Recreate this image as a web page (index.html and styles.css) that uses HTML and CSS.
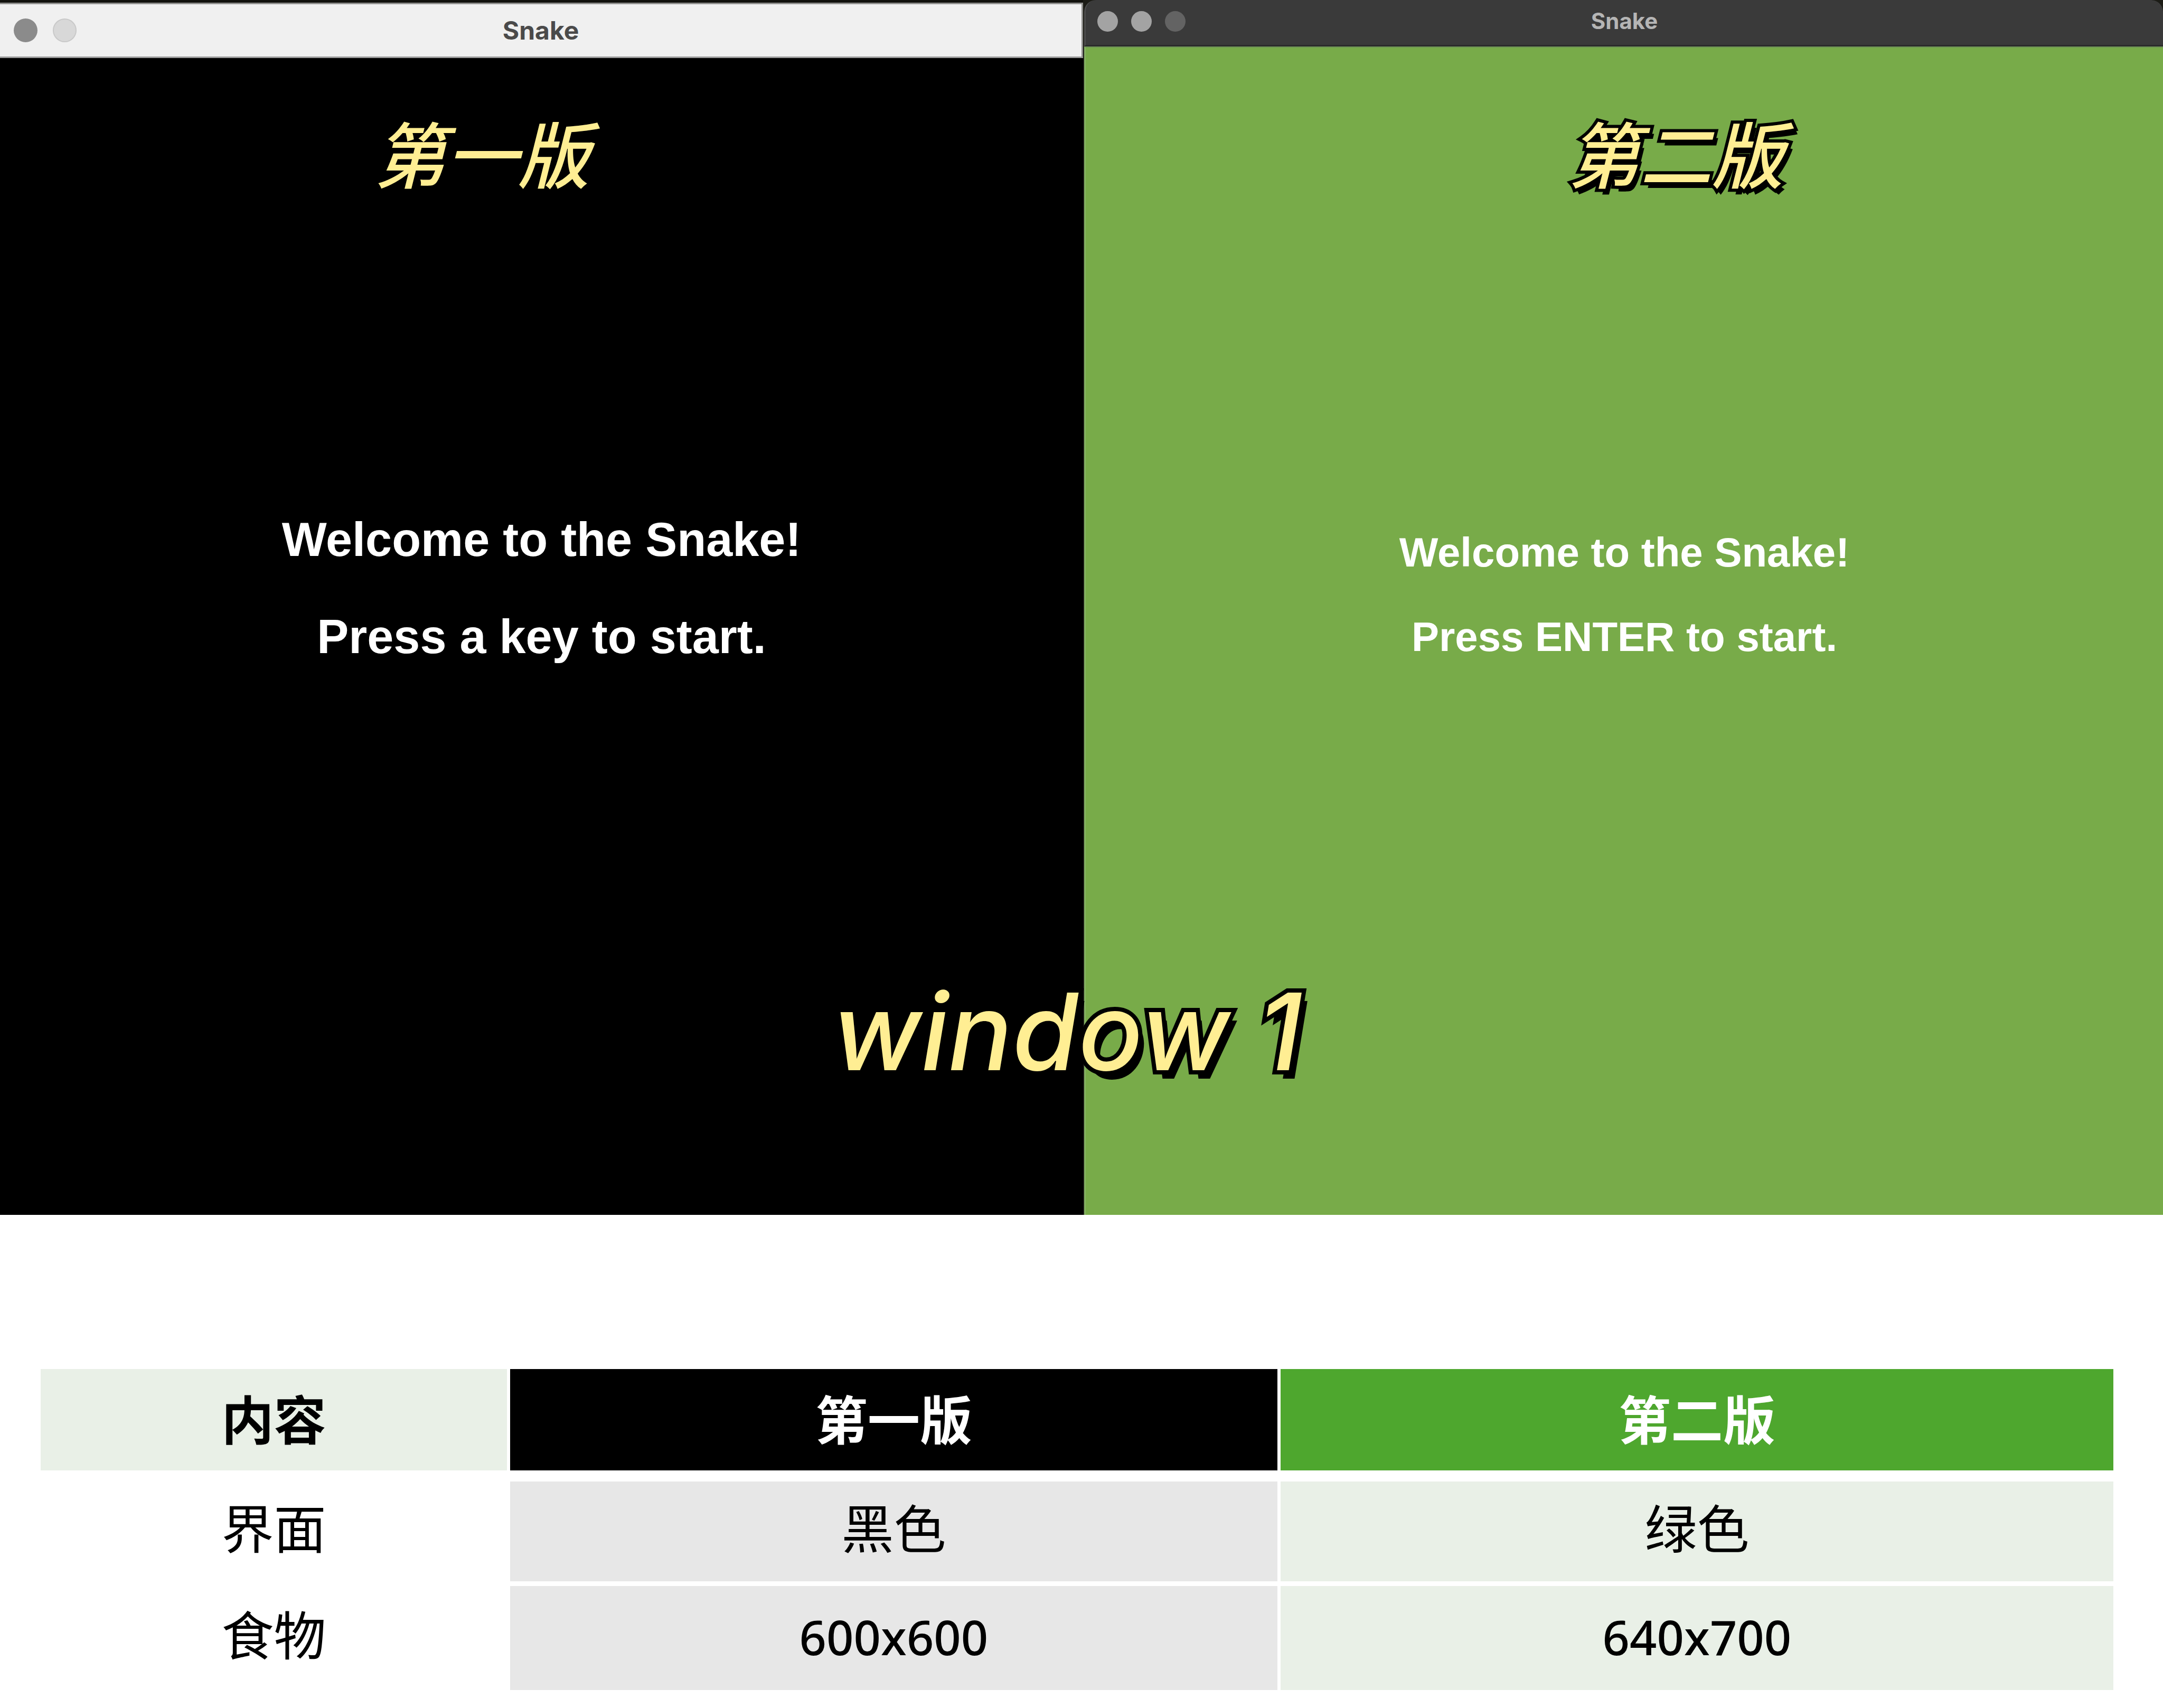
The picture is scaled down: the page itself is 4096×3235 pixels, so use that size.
FILE: index.html
```html
<!DOCTYPE html>
<html lang="zh-CN">
<head>
<meta charset="utf-8">
<meta name="viewport" content="width=device-width, initial-scale=1">
<title>Snake</title>
<link rel="stylesheet" href="styles.css">
</head>
<body>
<main class="page">
  <section class="stage">
    <article class="window window-first">
      <header class="titlebar">
        <div class="controls">
          <button class="dot dot-close" type="button" aria-label="Close"></button>
          <button class="dot dot-minimize" type="button" aria-label="Minimize"></button>
        </div>
        <h2 class="window-title">Snake</h2>
      </header>
      <div class="screen">
        <p class="message">Welcome to the Snake!</p>
        <p class="message">Press a key to start.</p>
      </div>
    </article>
    <article class="window window-second">
      <header class="titlebar">
        <div class="controls">
          <button class="dot dot-close" type="button" aria-label="Close"></button>
          <button class="dot dot-minimize" type="button" aria-label="Minimize"></button>
          <button class="dot dot-zoom" type="button" aria-label="Zoom"></button>
        </div>
        <h2 class="window-title">Snake</h2>
      </header>
      <div class="screen">
        <p class="message">Welcome to the Snake!</p>
        <p class="message">Press ENTER to start.</p>
      </div>
    </article>
    <p class="caption caption-first">第一版</p>
    <p class="caption caption-second">第二版</p>
    <p class="caption caption-step">window 1</p>
  </section>

  <section class="comparison">
    <table class="versions">
      <colgroup>
        <col class="col-topic">
        <col class="col-first">
        <col class="col-second">
      </colgroup>
      <thead>
        <tr>
          <th class="head-topic" scope="col">内容</th>
          <th class="head-first" scope="col">第一版</th>
          <th class="head-second" scope="col">第二版</th>
        </tr>
      </thead>
      <tbody>
        <tr>
          <th scope="row">界面</th>
          <td class="cell-first">黑色</td>
          <td class="cell-second">绿色</td>
        </tr>
        <tr>
          <th scope="row">食物</th>
          <td class="cell-first">600x600</td>
          <td class="cell-second">640x700</td>
        </tr>
      </tbody>
    </table>
  </section>
</main>
</body>
</html>
```
FILE: styles.css
```css
* {
  box-sizing: border-box;
}

body {
  margin: 0;
  background: #fff;
  color: #000;
  font-family: "Noto Sans", "Noto Sans CJK SC", sans-serif;
}

h2,
p {
  margin: 0;
}

/* Two game windows side by side */
.stage {
  position: relative;
  display: grid;
  grid-template-columns: 2051fr 2043fr;
  column-gap: 2px;
  aspect-ratio: 4096 / 2301;
  background: #1c1c16;
}

.window {
  display: flex;
  flex-direction: column;
  overflow: hidden;
}

.titlebar {
  display: grid;
  grid-template-columns: 1fr auto 1fr;
  align-items: center;
}

.controls {
  display: flex;
}

.dot {
  padding: 0;
  border: 0;
  border-radius: 50%;
}

.window-title {
  grid-column: 2;
  font-family: Inter, "Liberation Sans", sans-serif;
  font-weight: 700;
  line-height: 60px;
}

.screen {
  flex: 1;
  color: #fff;
  font-family: "Liberation Sans", Arial, sans-serif;
  font-weight: 700;
  text-align: center;
}

.window-first {
  padding-top: 5px;
  background: #12120e;
}

.window-first .titlebar {
  height: 105px;
  padding: 0 26px;
  border-top: 3px solid #8f8f8d;
  border-right: 3px solid #8f8f8d;
  border-bottom: 3px solid #9b9b9b;
  background: #f0f0f0;
}

.window-first .controls {
  gap: 29px;
}

.window-first .dot {
  width: 45px;
  height: 45px;
}

.window-first .dot-close {
  background: #8b8b8b;
}

.window-first .dot-minimize {
  border: 2px solid #c9c9c9;
  background: #d8d8d8;
}

.window-first .window-title {
  color: #4a4a4a;
  font-size: 48px;
}

.window-first .screen {
  padding-top: 820px;
  background: #000;
  font-size: 90px;
  line-height: 184px;
}

.window-second {
  border-radius: 22px 22px 0 0;
}

.window-second .titlebar {
  height: 88px;
  padding: 0 22px 5px;
  border-left: 3px solid #4c4c4c;
  border-bottom: 3px solid #2b2b2b;
  border-radius: 22px 22px 0 0;
  background: #3a3a3a;
}

.window-second .controls {
  gap: 25px;
}

.window-second .dot {
  width: 39px;
  height: 39px;
  background: #a3a3a3;
}

.window-second .dot-zoom {
  background: #636363;
}

.window-second .window-title {
  color: #b5b5b5;
  font-size: 42px;
}

.window-second .screen {
  padding-top: 876px;
  border-top: 2px solid #6f9157;
  border-left: 3px solid #85b163;
  background: #78ab49;
  font-size: 78px;
  line-height: 160px;
}

/* Subtitles laid over the recording */
.caption {
  position: absolute;
  color: #ffee93;
  font-style: italic;
  white-space: nowrap;
  paint-order: stroke fill;
  -webkit-text-stroke: 12px #000;
  text-shadow: 7px 11px 0 #000;
}

.caption-first,
.caption-second {
  top: 187px;
  font-family: "Noto Sans CJK SC", sans-serif;
  font-size: 136px;
  font-weight: 500;
  line-height: 200px;
}

.caption-first {
  left: 17.3%;
}

.caption-second {
  left: 72.5%;
}

.caption-step {
  top: 1804px;
  left: 38.5%;
  font-family: Inter, sans-serif;
  font-size: 202px;
  font-weight: 500;
  line-height: 300px;
  -webkit-text-stroke-width: 16px;
  text-shadow: 11px 16px 0 #000;
}

/* Version comparison table */
.comparison {
  padding: 292px 94px 32px 77px;
}

.versions {
  width: 100%;
  table-layout: fixed;
  border-spacing: 0;
  text-align: center;
}

.col-topic {
  width: 22.65%;
}

.col-first {
  width: 37.17%;
}

.versions th,
.versions td {
  height: 197px;
  padding: 0 0 12px;
  border: 0 solid #fff;
  border-right-width: 6px;
  font-size: 99px;
  font-weight: 400;
  line-height: 140px;
  background-clip: padding-box;
}

.versions th:last-child,
.versions td:last-child {
  border-right-width: 0;
}

.versions thead th {
  height: 213px;
  padding-bottom: 0;
  border-bottom-width: 21px;
  font-weight: 700;
}

.versions tbody tr:first-child > * {
  height: 198px;
  border-bottom-width: 9px;
}

.versions tbody tr:last-child td {
  padding-bottom: 6px;
  font-size: 90px;
  font-weight: 500;
}

.head-topic,
.cell-second {
  background-color: #e9f0e7;
}

.head-first {
  background-color: #000;
  color: #fff;
}

.head-second {
  background-color: #4ea72e;
  color: #fff;
}

.cell-first {
  background-color: #e7e7e7;
}
```
